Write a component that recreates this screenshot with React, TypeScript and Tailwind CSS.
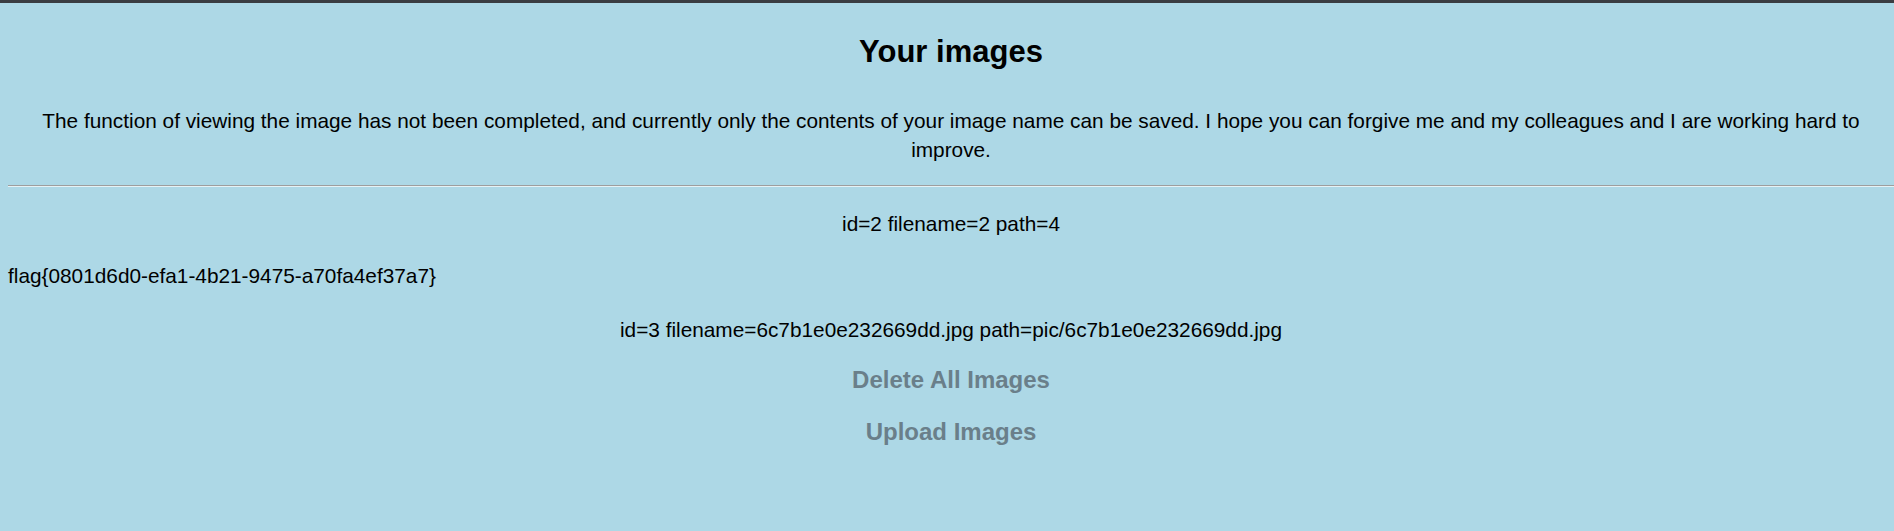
export default function App() {
  return (
    <div className="min-h-[531px] bg-[#add8e6] border-t-[3px] border-[#3a3d42] text-black font-['Liberation_Sans',Arial,sans-serif] text-[20.8px]">
      <div className="pl-2">
        <h2 className="text-center font-bold text-[31px] leading-[36px] pt-[31px]">Your images</h2>
        <p className="text-center leading-[29px] mt-[36px]">
          The function of viewing the image has not been completed, and currently only the contents of your image name can be saved. I hope you can forgive me and my colleagues and I are working hard to improve.
        </p>
        <div className="mt-[21px] border-t border-[#9e9e9e] border-b border-b-[#e6f2f5] h-0" />
        <p className="text-center leading-[24px] mt-[25px]">id=2 filename=2 path=4</p>
        <p className="leading-[24px] mt-[28px]">flag{"{"}0801d6d0-efa1-4b21-9475-a70fa4ef37a7{"}"}</p>
        <p className="text-center leading-[24px] mt-[30px]">id=3 filename=6c7b1e0e232669dd.jpg path=pic/6c7b1e0e232669dd.jpg</p>
        <div className="flex flex-col items-center">
          <button className="font-bold text-[24px] leading-[28px] text-[#6a7f8a] mt-[24px]">Delete All Images</button>
          <button className="font-bold text-[24px] leading-[28px] text-[#6a7f8a] mt-[24px]">Upload Images</button>
        </div>
      </div>
    </div>
  );
}
